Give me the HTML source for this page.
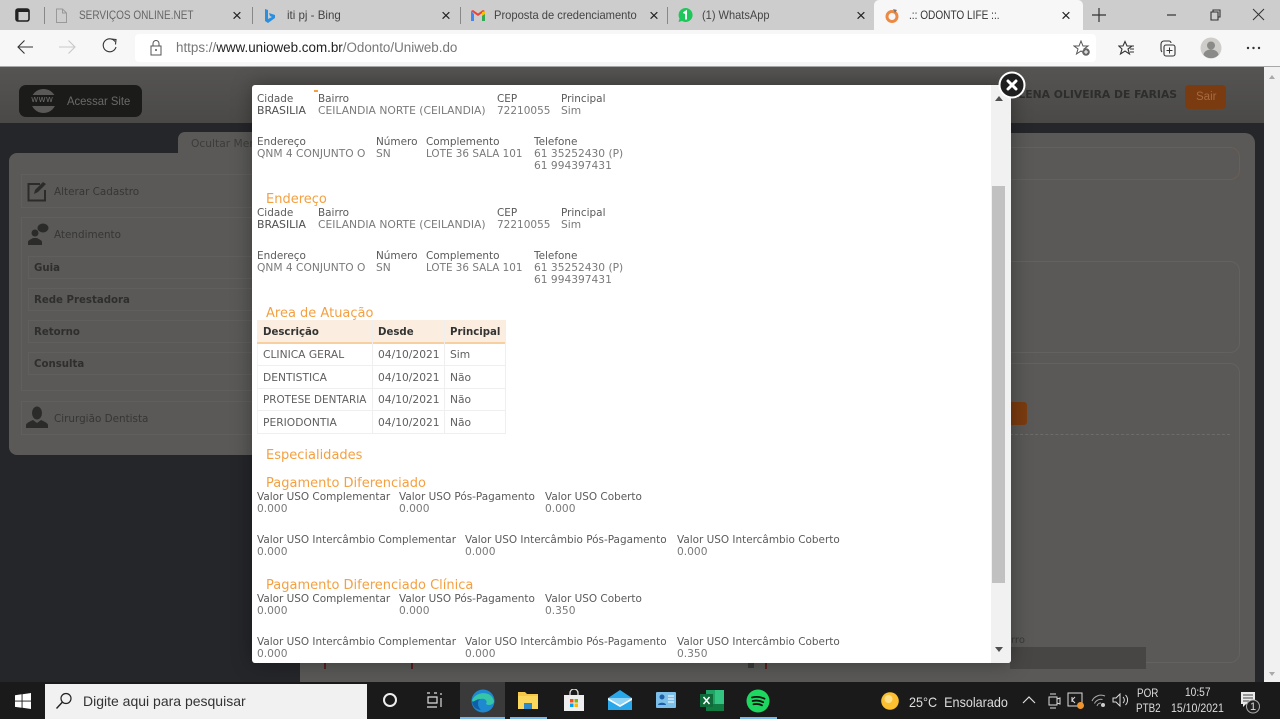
<!DOCTYPE html>
<html><head><meta charset="utf-8"><style>
html,body{margin:0;padding:0;width:1280px;height:719px;overflow:hidden;background:#25262a}
div,span,svg{position:absolute}
.u{font-family:"Liberation Sans",sans-serif;white-space:nowrap;line-height:14px;font-size:12px;color:#444;transform-origin:0 0}
.m{font-family:"DejaVu Sans",sans-serif;white-space:nowrap;font-size:10.45px;line-height:12px;color:#5a5a5a;margin-top:1px}
.v{color:#7a7a7a;font-size:10.65px}
.t{font-size:10.7px;color:#5f5f5f}
.th{font-weight:bold;color:#333;font-size:10.2px}
.h{font-family:"DejaVu Sans",sans-serif;white-space:nowrap;font-size:13px;line-height:16px;color:#f4a040;margin-top:2px}
.d{font-family:"DejaVu Sans",sans-serif;white-space:nowrap;font-size:10.4px;line-height:14px;color:#2e2e2c}
.b{font-weight:bold;font-size:10.2px;color:#2e2e2c}
.box{border:1px solid #605f5d;box-sizing:border-box;background:#5a5957}
.c{left:257px;width:249px;height:1px;background:#efefef}
.x{font-family:"Liberation Sans",sans-serif;font-size:17px;line-height:16px;color:#222}
.w{font-family:"Liberation Sans",sans-serif;color:#ddd;white-space:nowrap;font-size:12px;line-height:14px;transform-origin:0 0}
</style></head><body>

<!-- tab strip -->
<div style="left:0;top:0;width:1280px;height:30px;background:#cdcdcd"></div>
<div style="left:0;top:30px;width:1280px;height:36px;background:#f7f7f7"></div>
<div style="left:0;top:66px;width:1280px;height:1px;background:#a8a8a8"></div>
<div style="left:874px;top:0;width:209px;height:30px;background:#f7f7f7;border-radius:5px 5px 0 0"></div>
<svg style="left:15px;top:8px" width="16" height="15" viewBox="0 0 16 15"><rect x="1" y="1" width="13" height="12" rx="2" fill="none" stroke="#222" stroke-width="1.6"/><rect x="1" y="1" width="13" height="3" fill="#222"/><rect x="1" y="1" width="2.500" height="12" fill="#222"/></svg>
<div style="left:44px;top:7px;width:1px;height:17px;background:#888"></div>
<svg style="left:55px;top:8px" width="13" height="16" viewBox="0 0 13 16"><path d="M1.500 1h6l4 4v9.500h-10zM7.500 1v4h4" fill="none" stroke="#999" stroke-width="1"/></svg>
<div class="u" style="left:79px;top:8px;color:#666;transform:scaleX(.835)">SERVIÇOS ONLINE.NET</div>
<div class="x" style="left:232px;top:8px">×</div>
<div style="left:252px;top:7px;width:1px;height:17px;background:#888"></div>
<svg style="left:264px;top:9px" width="12" height="16" viewBox="0 0 12 16"><path d="M1 0l3 1v9l4-2-2-1-1-3 6 2v3l-7 5-3-2z" fill="#2a8fe0"/></svg>
<div class="u" style="left:287px;top:8px;transform:scaleX(.96)">iti pj - Bing</div>
<div class="x" style="left:441px;top:8px">×</div>
<div style="left:460px;top:7px;width:1px;height:17px;background:#888"></div>
<svg style="left:471px;top:10px" width="14" height="11" viewBox="0 0 14 11"><path d="M0 1v10h3V4z" fill="#4285f4"/><path d="M14 1v10h-3V4z" fill="#34a853"/><path d="M0 1l7 5 7-5-2-1-5 3.500L2 0z" fill="#ea4335"/><path d="M11 2l3-1v3l-3 2z" fill="#fbbc04"/></svg>
<div class="u" style="left:494px;top:8px;width:154px;overflow:hidden;transform:scaleX(.93)">Proposta de credenciamento</div>
<div class="x" style="left:649px;top:8px">×</div>
<div style="left:667px;top:7px;width:1px;height:17px;background:#888"></div>
<svg style="left:677px;top:7px" width="17" height="17" viewBox="0 0 17 17"><path d="M8.500 1a7 7 0 1 1-3.500 13l-3.500 1 1-3.500A7 7 0 0 1 8.500 1z" fill="#1fc65a"/><path d="M6.500 6.200L9 4.500v8" fill="none" stroke="#fff" stroke-width="1.900"/></svg>
<div class="u" style="left:702px;top:8px;transform:scaleX(.92)">(1) WhatsApp</div>
<div class="x" style="left:856px;top:8px">×</div>
<svg style="left:884px;top:7px" width="16" height="17" viewBox="0 0 16 17"><circle cx="8" cy="9.500" r="5" fill="none" stroke="#ec8a45" stroke-width="3"/><path d="M9 2l4 1-2 3z" fill="#777"/></svg>
<div class="u" style="left:909px;top:8px;color:#333;transform:scaleX(.84)">.:: ODONTO LIFE ::.</div>
<div class="x" style="left:1061px;top:8px">×</div>
<svg style="left:1091px;top:7px" width="16" height="16" viewBox="0 0 16 16"><path d="M8 1v14M1 8h14" stroke="#333" stroke-width="1.200"/></svg>
<svg style="left:1165px;top:8px" width="100" height="14" viewBox="0 0 100 14"><path d="M2 7h9" stroke="#333" stroke-width="1.200"/><path d="M46 4h7v8h-7zM48 4V2h7v7h-2" fill="none" stroke="#333" stroke-width="1.100"/><path d="M88 1l11 11M99 1L88 12" stroke="#333" stroke-width="1"/></svg>

<!-- address bar -->
<svg style="left:16px;top:38px" width="110" height="18" viewBox="0 0 110 18"><path d="M2 9h15M8.500 2.500L2 9l6.500 6.500" fill="none" stroke="#333" stroke-width="1.100"/><path d="M43 9h15M52.500 2.500L59 9l-6.500 6.500" fill="none" stroke="#c8c8c8" stroke-width="1.100"/><path d="M99 3.500A6.500 6.500 0 1 0 100 9" fill="none" stroke="#333" stroke-width="1.100"/><path d="M95 1l5 .5-.500 5" fill="none" stroke="#333" stroke-width="1.100"/></svg>
<div style="left:135px;top:34px;width:961px;height:28px;background:#fff;border-radius:4px"></div>
<svg style="left:149px;top:40px" width="14" height="16" viewBox="0 0 14 16"><path d="M4 6V3.500a3 3 0 0 1 6 0V6M2 6h10v9H2z" fill="none" stroke="#555"/><circle cx="7" cy="10" r="1" fill="#555"/></svg>
<div class="u" style="left:176px;top:41px;font-size:13.400px;color:#777">https://<span style="position:static;color:#222">www.unioweb.com.br</span>/Odonto/Uniweb.do</div>
<svg style="left:1073px;top:40px" width="18" height="17" viewBox="0 0 18 17"><path d="M8 1l2 5h5l-4 3 1.500 5L8 11l-4.500 3L5 9 1 6h5z" fill="none" stroke="#555"/><circle cx="13" cy="12" r="3.800" fill="#666"/><path d="M13 10v4M11 12h4" stroke="#fff"/></svg>
<svg style="left:1118px;top:40px" width="18" height="17" viewBox="0 0 18 17"><path d="M7 1.500l2 4.500h5l-4 3 1.500 5L7 11l-4.500 3L4 9 .8 6H5z" fill="none" stroke="#333" stroke-width="1.100"/><path d="M11 6h5M12 9h4M12 12h4" stroke="#333"/></svg>
<svg style="left:1159px;top:39px" width="18" height="18" viewBox="0 0 18 18"><path d="M3 13a4 4 0 0 1-1-3V5a3 3 0 0 1 3-3h5a2 2 0 0 1 2 2" fill="none" stroke="#333" stroke-width="1.100"/><rect x="5" y="6" width="11" height="11" rx="2" fill="none" stroke="#333" stroke-width="1.100"/><path d="M10.500 8.500v6M7.500 11.500h6" stroke="#333"/></svg>
<svg style="left:1200px;top:37px" width="22" height="22" viewBox="0 0 22 22"><circle cx="11" cy="11" r="10.500" fill="#cfcdc9"/><circle cx="11" cy="8.500" r="4" fill="#8a8a88"/><path d="M3.500 18a7.500 5.500 0 0 1 15 0 10.500 10.500 0 0 1-15 0z" fill="#8a8a88"/></svg>
<svg style="left:1246px;top:46px" width="15" height="4" viewBox="0 0 15 4"><circle cx="2" cy="2" r="1.200" fill="#333"/><circle cx="7.500" cy="2" r="1.200" fill="#333"/><circle cx="13" cy="2" r="1.200" fill="#333"/></svg>

<!-- dimmed page -->
<div style="left:0;top:67px;width:1264px;height:615px;background:#25262a"></div>
<div style="left:0;top:67px;width:1264px;height:56px;background:linear-gradient(#555452,#4a4947)"></div>
<div style="left:19px;top:85px;width:123px;height:32px;background:#1b1b1a;border-radius:7px"></div>
<div style="left:31px;top:89px;width:25px;height:24px;border-radius:50%;background:#5a5957"></div>
<div style="left:30px;top:95px;width:27px;height:11px;background:#1b1b1a"></div>
<div class="d" style="left:31px;top:93px;font-size:9px;color:#6a6967">www</div>
<div class="u" style="left:67px;top:94px;color:#6a6a68;transform:scaleX(.94)">Acessar Site</div>
<div class="d b" style="left:1011px;top:88px;font-size:10.800px;color:#2d2d2b">ELENA OLIVEIRA DE FARIAS</div>
<div style="left:1185px;top:85px;width:41px;height:24px;background:#7a3b10;border-radius:4px"></div>
<div class="u" style="left:1196px;top:90px;color:#a86a3e;font-size:11.500px">Sair</div>

<!-- main panel -->
<div style="left:300px;top:133px;width:955px;height:549px;background:#5a5957;border-radius:10px 10px 0 0"></div>
<div style="left:1000px;top:147px;width:240px;height:33px;box-sizing:border-box;border:1px solid #6a5f52;border-left:0;border-radius:0 10px 10px 0"></div>
<div style="left:1000px;top:261px;width:240px;height:92px;box-sizing:border-box;border:1px solid #636260;border-left:0;border-radius:0 10px 10px 0"></div>
<div style="left:1000px;top:363px;width:240px;height:300px;box-sizing:border-box;border:1px solid #636260;border-left:0;border-radius:0 10px 10px 0"></div>
<div style="left:1010px;top:402px;width:17px;height:23px;background:#7a3b10;border-radius:0 3px 3px 0"></div>
<div style="left:1010px;top:434px;width:220px;height:0;border-top:1px dashed #6d6c6a"></div>
<div style="left:1010px;top:647px;width:136px;height:22px;background:#474644"></div>
<div class="d" style="left:1011px;top:634px;font-size:10px;color:#3a3a38">rro</div>
<div style="left:324px;top:663px;width:2px;height:6px;background:#5a1f1f"></div>
<div style="left:411px;top:663px;width:2px;height:6px;background:#5a1f1f"></div>
<div style="left:765px;top:663px;width:2px;height:6px;background:#5a1f1f"></div>
<div style="left:748px;top:662px;width:6px;height:6px;background:#3a3a38"></div>

<!-- left menu -->
<div style="left:178px;top:132px;width:80px;height:24px;background:#5a5957;border-radius:7px 0 0 0"></div>
<div class="d" style="left:191px;top:137px;color:#3c3c3a;font-size:10.700px">Ocultar Menu</div>
<div style="left:9px;top:153px;width:250px;height:302px;background:#5a5957;border-radius:8px"></div>
<div class="box" style="left:21px;top:174px;width:235px;height:34px"></div>
<svg style="left:27px;top:181px" width="21" height="21" viewBox="0 0 21 21"><path d="M13 3H1.500v16.500H18V9" fill="none" stroke="#2b2b2a" stroke-width="2"/><path d="M7 13l1-4 8-8 3 2-8 8z" fill="#2b2b2a"/></svg>
<div class="d" style="left:54px;top:185px;color:#363634">Alterar Cadastro</div>
<div class="box" style="left:21px;top:217px;width:235px;height:174px"></div>
<svg style="left:27px;top:223px" width="22" height="23" viewBox="0 0 22 23"><circle cx="8" cy="10" r="3.500" fill="#2b2b2a"/><path d="M1 22v-3c0-2 4-3 5-4h4c1 1 5 2 5 4v3z" fill="#2b2b2a"/><ellipse cx="16" cy="5" rx="5.500" ry="4.500" fill="#2b2b2a"/></svg>
<div class="d" style="left:54px;top:228px;color:#363634">Atendimento</div>
<div class="box" style="left:28px;top:256px;width:228px;height:23px"></div>
<div class="box" style="left:28px;top:288px;width:228px;height:23px"></div>
<div class="box" style="left:28px;top:320px;width:228px;height:23px"></div>
<div class="box" style="left:28px;top:352px;width:228px;height:23px"></div>
<div class="d b" style="left:34px;top:262px">Guia</div>
<div class="d b" style="left:34px;top:294px">Rede Prestadora</div>
<div class="d b" style="left:34px;top:326px">Retorno</div>
<div class="d b" style="left:34px;top:358px">Consulta</div>
<div class="box" style="left:21px;top:401px;width:235px;height:34px"></div>
<svg style="left:26px;top:406px" width="22" height="23" viewBox="0 0 22 23"><ellipse cx="11" cy="7" rx="5" ry="6.500" fill="#2b2b2a"/><path d="M0 22v-3c0-2 5-4 7-5l4 3 4-3c2 1 7 3 7 5v3z" fill="#2b2b2a"/></svg>
<div class="d" style="left:54px;top:412px;color:#363634">Cirurgião Dentista</div>

<!-- page scrollbar -->
<div style="left:1264px;top:67px;width:16px;height:615px;background:#f1f1f1"></div>
<svg style="left:1264px;top:72px" width="16" height="610" viewBox="0 0 16 610"><path d="M5 7l3-4 3 4z" fill="#aaa"/><path d="M5 600l3 4 3-4z" fill="#aaa"/></svg>

<!-- modal -->
<div style="left:252px;top:85px;width:759px;height:578px;background:#fff;border-radius:3px;box-shadow:0 0 20px rgba(0,0,0,.35);overflow:hidden"></div>
<div style="left:991px;top:85px;width:20px;height:578px;background:#f1f1f1;border-radius:0 3px 3px 0"></div>
<div style="left:992px;top:186px;width:13px;height:397px;background:#c1c1c1"></div>
<svg style="left:991px;top:92px" width="16" height="566" viewBox="0 0 16 566"><path d="M4 9l4-5 4 5z" fill="#505050"/><path d="M4 555l4 5 4-5z" fill="#505050"/></svg>
<div style="left:314px;top:90px;width:4px;height:2px;background:#f4a040"></div>

<div class="m" style="left:257px;top:92px">Cidade</div><div class="m" style="left:318px;top:92px">Bairro</div><div class="m" style="left:497px;top:92px">CEP</div><div class="m" style="left:561px;top:92px">Principal</div>
<div class="m v" style="left:257px;top:104px;color:#505050;font-size:10.900px">BRASILIA</div><div class="m v" style="left:318px;top:104px;font-size:10.750px">CEILANDIA NORTE (CEILANDIA)</div><div class="m v" style="left:497px;top:104px;font-size:10.500px">72210055</div><div class="m v" style="left:561px;top:104px">Sim</div>
<div class="m" style="left:257px;top:135px">Endereço</div><div class="m" style="left:376px;top:135px">Número</div><div class="m" style="left:426px;top:135px">Complemento</div><div class="m" style="left:534px;top:135px">Telefone</div>
<div class="m v" style="left:257px;top:147px">QNM 4 CONJUNTO O</div><div class="m v" style="left:376px;top:147px">SN</div><div class="m v" style="left:426px;top:147px;font-size:10.400px">LOTE 36 SALA 101</div><div class="m v" style="left:534px;top:147px">61 35252430 (P)</div>
<div class="m v" style="left:534px;top:159px">61 994397431</div>

<div class="h" style="left:266px;top:190px">Endereço</div>
<div class="m" style="left:257px;top:206px">Cidade</div><div class="m" style="left:318px;top:206px">Bairro</div><div class="m" style="left:497px;top:206px">CEP</div><div class="m" style="left:561px;top:206px">Principal</div>
<div class="m v" style="left:257px;top:218px;color:#505050;font-size:10.900px">BRASILIA</div><div class="m v" style="left:318px;top:218px;font-size:10.750px">CEILANDIA NORTE (CEILANDIA)</div><div class="m v" style="left:497px;top:218px;font-size:10.500px">72210055</div><div class="m v" style="left:561px;top:218px">Sim</div>
<div class="m" style="left:257px;top:249px">Endereço</div><div class="m" style="left:376px;top:249px">Número</div><div class="m" style="left:426px;top:249px">Complemento</div><div class="m" style="left:534px;top:249px">Telefone</div>
<div class="m v" style="left:257px;top:261px">QNM 4 CONJUNTO O</div><div class="m v" style="left:376px;top:261px">SN</div><div class="m v" style="left:426px;top:261px;font-size:10.400px">LOTE 36 SALA 101</div><div class="m v" style="left:534px;top:261px">61 35252430 (P)</div>
<div class="m v" style="left:534px;top:273px">61 994397431</div>

<div class="h" style="left:266px;top:304px">Area de Atuação</div>
<div style="left:257px;top:320px;width:249px;height:22px;background:#fbeee0"></div>
<div style="left:257px;top:342px;width:249px;height:2px;background:#f8cfa0"></div>
<div class="c" style="top:365px"></div><div class="c" style="top:388px"></div><div class="c" style="top:410px"></div><div class="c" style="top:433px"></div>
<div style="left:372px;top:320px;width:1px;height:113px;background:#efefef"></div>
<div style="left:444px;top:320px;width:1px;height:113px;background:#efefef"></div>
<div style="left:505px;top:320px;width:1px;height:113px;background:#efefef"></div>
<div style="left:257px;top:344px;width:1px;height:89px;background:#f4f4f4"></div>
<div class="m th" style="left:263px;top:326px">Descrição</div><div class="m th" style="left:378px;top:326px">Desde</div><div class="m th" style="left:450px;top:326px">Principal</div>
<div class="m t" style="left:263px;top:348px">CLINICA GERAL</div><div class="m t" style="left:378px;top:348px">04/10/2021</div><div class="m t" style="left:450px;top:348px">Sim</div>
<div class="m t" style="left:263px;top:371px">DENTISTICA</div><div class="m t" style="left:378px;top:371px">04/10/2021</div><div class="m t" style="left:450px;top:371px">Não</div>
<div class="m t" style="left:263px;top:393px;font-size:10.400px">PROTESE DENTARIA</div><div class="m t" style="left:378px;top:393px">04/10/2021</div><div class="m t" style="left:450px;top:393px">Não</div>
<div class="m t" style="left:263px;top:416px">PERIODONTIA</div><div class="m t" style="left:378px;top:416px">04/10/2021</div><div class="m t" style="left:450px;top:416px">Não</div>

<div class="h" style="left:266px;top:446px">Especialidades</div>

<div class="h" style="left:266px;top:474px">Pagamento Diferenciado</div>
<div class="m" style="left:257px;top:490px">Valor USO Complementar</div><div class="m" style="left:399px;top:490px">Valor USO Pós-Pagamento</div><div class="m" style="left:545px;top:490px">Valor USO Coberto</div>
<div class="m v" style="left:257px;top:502px">0.000</div><div class="m v" style="left:399px;top:502px">0.000</div><div class="m v" style="left:545px;top:502px">0.000</div>
<div class="m" style="left:257px;top:533px">Valor USO Intercâmbio Complementar</div><div class="m" style="left:465px;top:533px">Valor USO Intercâmbio Pós-Pagamento</div><div class="m" style="left:677px;top:533px">Valor USO Intercâmbio Coberto</div>
<div class="m v" style="left:257px;top:545px">0.000</div><div class="m v" style="left:465px;top:545px">0.000</div><div class="m v" style="left:677px;top:545px">0.000</div>

<div class="h" style="left:266px;top:576px">Pagamento Diferenciado Clínica</div>
<div class="m" style="left:257px;top:592px">Valor USO Complementar</div><div class="m" style="left:399px;top:592px">Valor USO Pós-Pagamento</div><div class="m" style="left:545px;top:592px">Valor USO Coberto</div>
<div class="m v" style="left:257px;top:604px">0.000</div><div class="m v" style="left:399px;top:604px">0.000</div><div class="m v" style="left:545px;top:604px">0.350</div>
<div class="m" style="left:257px;top:635px">Valor USO Intercâmbio Complementar</div><div class="m" style="left:465px;top:635px">Valor USO Intercâmbio Pós-Pagamento</div><div class="m" style="left:677px;top:635px">Valor USO Intercâmbio Coberto</div>
<div class="m v" style="left:257px;top:647px">0.000</div><div class="m v" style="left:465px;top:647px">0.000</div><div class="m v" style="left:677px;top:647px">0.350</div>

<!-- close -->
<svg style="left:998px;top:71px" width="28" height="28" viewBox="0 0 28 28"><circle cx="14" cy="14" r="12.500" fill="#1f1f1f" stroke="#fff" stroke-width="2"/><path d="M10 10l8 8M18 10l-8 8" stroke="#fff" stroke-width="3" stroke-linecap="round"/></svg>

<!-- taskbar -->
<div style="left:0;top:682px;width:1280px;height:37px;background:#1a1a1a"></div>
<svg style="left:15px;top:693px" width="16" height="16" viewBox="0 0 16 16"><path d="M0 2.200l6.600-.9v6.300H0zM7.500 1.200L16 0v7.600H7.500zM0 8.500h6.600v6.300L0 13.900zM7.500 8.500H16V16l-8.500-1.200z" fill="#fff"/></svg>
<div style="left:45px;top:684px;width:322px;height:35px;background:#f1f1f1"></div>
<svg style="left:55px;top:692px" width="18" height="18" viewBox="0 0 18 18"><circle cx="11" cy="6.500" r="5" fill="none" stroke="#222" stroke-width="1.200"/><path d="M7.500 10L1.500 16.500" stroke="#222" stroke-width="1.400"/></svg>
<div class="u" style="left:83px;top:693px;font-size:14px;line-height:16px;color:#333">Digite aqui para pesquisar</div>
<svg style="left:382px;top:692px" width="16" height="16" viewBox="0 0 16 16"><circle cx="8" cy="8" r="6" fill="none" stroke="#eee" stroke-width="2"/></svg>
<svg style="left:426px;top:692px" width="18" height="16" viewBox="0 0 18 16"><path d="M1 1h3M8 1h3M1 15h10M2 5h9v6H2zM15 1v2M15 6v9" fill="none" stroke="#ddd" stroke-width="1.200"/></svg>
<div style="left:460px;top:682px;width:45px;height:37px;background:#3a3a3a"></div>
<div style="left:460px;top:717px;width:45px;height:2px;background:#76b9ed"></div>
<div style="left:510px;top:717px;width:37px;height:2px;background:#76b9ed"></div>
<div style="left:740px;top:717px;width:37px;height:2px;background:#76b9ed"></div>
<svg style="left:471px;top:689px" width="24" height="24" viewBox="0 0 24 24"><circle cx="12" cy="12" r="11.500" fill="#1e88d0"/><path d="M1 12C3 3 20 0 23 12c0 4-6 5-8 3 2-3-1-6-5-5-4 1-4 7 0 11C5 21 1 17 1 12z" fill="#35c6a8"/><path d="M10 10c-4 1-4 7 0 11-5 0-9-4-9-9 1 2 4-2 9-2z" fill="#0f5fa8"/></svg>
<svg style="left:518px;top:690px" width="20" height="20" viewBox="0 0 20 20"><path d="M0 2h7l2 2h11v15H0z" fill="#f5c84a"/><rect y="6" width="20" height="13" fill="#fbd75b"/><rect x="6" y="13" width="8" height="6" fill="#2f89c9"/></svg>
<svg style="left:563px;top:689px" width="22" height="22" viewBox="0 0 22 22"><path d="M7 6V4a4 4 0 0 1 8 0v2" fill="none" stroke="#ddd" stroke-width="1.300"/><rect x="1" y="6" width="20" height="16" fill="#eee"/><rect x="7" y="10" width="3.500" height="3.500" fill="#f25022"/><rect x="11.500" y="10" width="3.500" height="3.500" fill="#7fba00"/><rect x="7" y="14.500" width="3.500" height="3.500" fill="#00a4ef"/><rect x="11.500" y="14.500" width="3.500" height="3.500" fill="#ffb900"/></svg>
<svg style="left:608px;top:690px" width="24" height="20" viewBox="0 0 24 20"><path d="M0 8L12 0l12 8v12H0z" fill="#28a8ea"/><path d="M0 8l12 7 12-7" fill="#8fd4f7"/><path d="M0 8l12 7 12-7v2l-12 7L0 10z" fill="#fff"/></svg>
<svg style="left:656px;top:692px" width="20" height="16" viewBox="0 0 20 16"><rect width="20" height="16" rx="1" fill="#7cbfe8"/><circle cx="6" cy="5" r="2.500" fill="#1d5fa8"/><path d="M2 13c0-3 8-3 8 0z" fill="#1d5fa8"/><path d="M12 4h6M12 7h6M12 10h6" stroke="#fff"/></svg>
<svg style="left:700px;top:690px" width="24" height="21" viewBox="0 0 24 21"><rect x="6" y="0" width="18" height="21" fill="#21a366"/><rect x="15" y="0" width="9" height="21" fill="#33c481"/><rect x="6" y="14" width="18" height="7" fill="#107c41"/><rect y="4" width="13" height="13" fill="#0f6b3a"/><path d="M3.500 7l6 7M9.500 7l-6 7" stroke="#fff" stroke-width="1.500"/></svg>
<svg style="left:746px;top:689px" width="24" height="24" viewBox="0 0 24 24"><circle cx="12" cy="12" r="11.500" fill="#1ed760"/><path d="M6 8.500c4-1 8-1 12.500 1.200M6.700 12c3.500-.8 7-.6 10.500 1.200M7.500 15.300c3-.7 6-.4 8.500 1" fill="none" stroke="#121212" stroke-width="1.800" stroke-linecap="round"/></svg>
<svg style="left:881px;top:692px" width="18" height="18" viewBox="0 0 18 18"><circle cx="9" cy="9" r="8.800" fill="#fbbf30"/><circle cx="7.500" cy="7" r="4" fill="#ffe08a"/></svg>
<div class="w" style="left:909px;top:694px;font-size:14px;line-height:16px;transform:scaleX(.9)">25°C&nbsp; Ensolarado</div>
<svg style="left:1022px;top:695px" width="14" height="10" viewBox="0 0 14 10"><path d="M1 8l6-6 6 6" fill="none" stroke="#ddd" stroke-width="1.200"/></svg>
<svg style="left:1047px;top:693px" width="14" height="16" viewBox="0 0 14 16"><path d="M3 1h6M3 15h6M2 4h8v8H2z" fill="none" stroke="#ddd"/><path d="M10 6l3-1v6l-3-1" fill="none" stroke="#ddd"/></svg>
<svg style="left:1067px;top:692px" width="18" height="18" viewBox="0 0 18 18"><rect x="1" y="1" width="14" height="13" fill="none" stroke="#ddd"/><path d="M5 5v5M8 5l-3 3 3 3" fill="none" stroke="#ddd"/><circle cx="13.500" cy="13.500" r="3.500" fill="#f0932b"/></svg>
<svg style="left:1091px;top:694px" width="15" height="14" viewBox="0 0 15 14"><path d="M1 7a10 10 0 0 1 13-5M3.500 9.500a7 7 0 0 1 8-4M6 12a4 4 0 0 1 4-3" fill="none" stroke="#aaa"/><circle cx="12" cy="11" r="2" fill="#ccc"/></svg>
<svg style="left:1112px;top:693px" width="16" height="14" viewBox="0 0 16 14"><path d="M1 5h3l4-4v12l-4-4H1z" fill="none" stroke="#ddd"/><path d="M11 4a4 4 0 0 1 0 6M13.500 2a7 7 0 0 1 0 10" fill="none" stroke="#ddd"/></svg>
<div class="w" style="left:1137px;top:686px;transform:scaleX(.82)">POR</div>
<div class="w" style="left:1136px;top:701px;transform:scaleX(.82)">PTB2</div>
<div class="w" style="left:1185px;top:685px;transform:scaleX(.85)">10:57</div>
<div class="w" style="left:1171px;top:701px;transform:scaleX(.88)">15/10/2021</div>
<svg style="left:1240px;top:692px" width="20" height="22" viewBox="0 0 20 22"><path d="M1 0h14v12H6l-3 3v-3H1z" fill="#e8e8e8"/><path d="M3 3h10M3 6h10M3 9h7" stroke="#444"/><circle cx="13" cy="14.500" r="6.500" fill="#222" stroke="#aaa"/></svg>
<div class="w" style="left:1250px;top:700px;font-size:11px">1</div>
</body></html>
